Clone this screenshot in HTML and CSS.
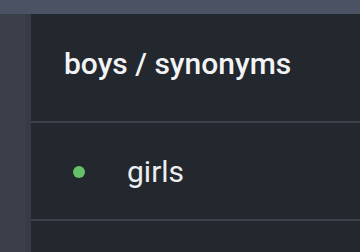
FILE: index.html
```html
<!DOCTYPE html>
<html>
<head>
<meta charset="utf-8">
<link rel="stylesheet" href="styles.css">
</head>
<body>
<div class="topbar"></div>
<div class="layout">
  <div class="sidebar"><div class="sidebar-edge"></div></div>
  <div class="content">
    <div class="header"><span class="title">boys / synonyms</span></div>
    <div class="divider"></div>
    <div class="row">
      <span class="dot"></span>
      <span class="label">girls</span>
    </div>
    <div class="divider"></div>
    <div class="row row-last"></div>
  </div>
</div>
</body>
</html>
```
FILE: styles.css
```css
html, body {
  margin: 0;
  padding: 0;
  width: 360px;
  height: 252px;
  overflow: hidden;
  background: #23272e;
  font-family: Roboto, "Liberation Sans", sans-serif;
}
.topbar {
  height: 14px;
  background: #4a5264;
}
.layout {
  display: flex;
  height: 238px;
  overflow: hidden;
}
.sidebar {
  width: 31px;
  background: #3a3f4a;
  display: flex;
  justify-content: flex-end;
}
.sidebar-edge {
  width: 5px;
  background: #363b45;
}
.content {
  flex: 1;
  display: flex;
  flex-direction: column;
  background: #23272e;
  overflow: hidden;
}
.header {
  height: 107px;
  flex-shrink: 0;
  display: flex;
  align-items: center;
  padding: 0 0 8px 33px;
  box-sizing: border-box;
}
.title {
  color: #f2f3f5;
  font-size: 30px;
  font-weight: 500;
}
.divider {
  height: 2px;
  flex-shrink: 0;
  background: #3b404b;
}
.row {
  height: 96px;
  display: flex;
  align-items: center;
  padding-left: 42px;
  flex-shrink: 0;
}
.row-last {
  height: auto;
  flex: 1;
}
.dot {
  width: 12px;
  height: 12px;
  border-radius: 50%;
  background: #66bf6a;
  margin: 2px 42px 0 0;
}
.label {
  color: #eceef1;
  font-size: 30px;
}
```
